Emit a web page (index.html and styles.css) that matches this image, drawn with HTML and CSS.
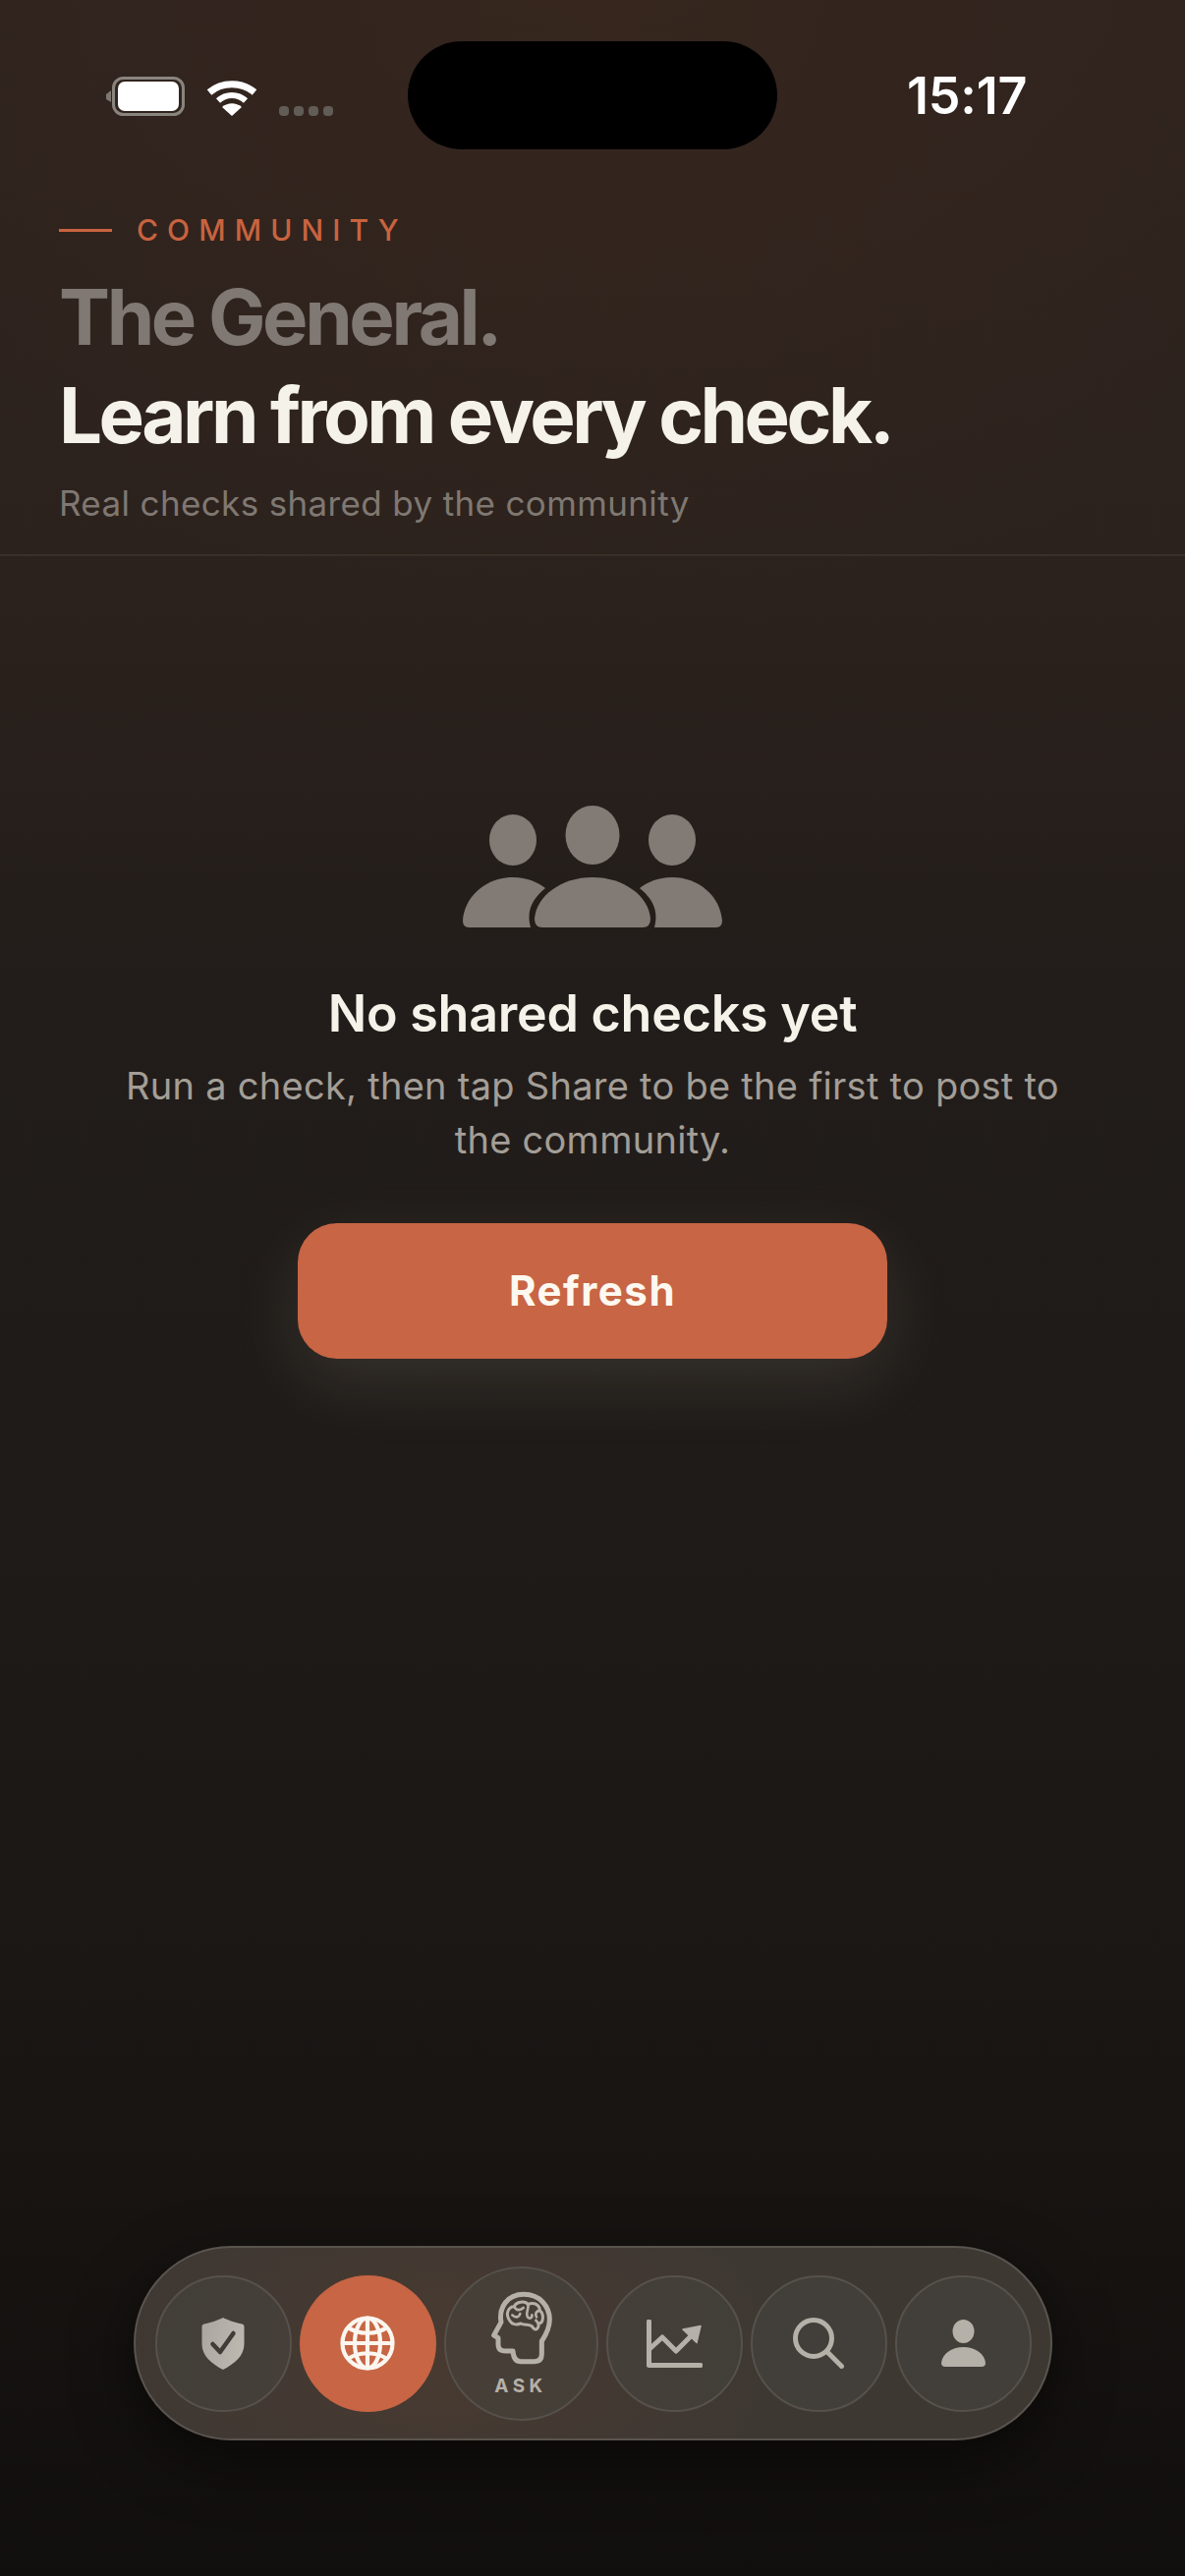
FILE: index.html
```html
<!DOCTYPE html>
<html lang="en">
<head>
    <meta charset="UTF-8">
    <meta name="viewport" content="width=device-width, initial-scale=1.0">
    <title>The General</title>
    <link rel="stylesheet" href="styles.css">
</head>
<body>
    <div class="page">
        <div class="status">
            <div class="status-left">
                <svg class="battery" width="84" height="40" viewBox="0 0 84 40">
                    <path d="M8 14 L3 18 V23 L8 26 Z" fill="#7d7671"/>
                    <rect x="10.5" y="1.5" width="71" height="37" rx="10" fill="none" stroke="#8a847f" stroke-width="3"/>
                    <rect x="15" y="5" width="62" height="30" rx="7" fill="#fff"/>
                </svg>
                <svg class="wifi" width="52" height="38" viewBox="0 0 52 38">
                    <path d="M3 14 C16 3 36 3 49 14" fill="none" stroke="#fff" stroke-width="7"/>
                    <path d="M12 22.500 C20 15 32 15 40 22.500" fill="none" stroke="#fff" stroke-width="6"/>
                    <path d="M26 38 L16 29 C22 24 30 24 36 29 Z" fill="#fff"/>
                </svg>
                <div class="signal"><i></i><i></i><i></i><i></i></div>
            </div>
            <div class="island"></div>
            <div class="time">15:17</div>
        </div>

        <header class="head">
            <div class="kicker"><span class="kicker-line"></span>COMMUNITY</div>
            <h1 class="title title-dim">The General.</h1>
            <h1 class="title">Learn from every check.</h1>
            <p class="sub">Real checks shared by the community</p>
        </header>

        <main class="empty">
            <svg class="people" width="264" height="124" viewBox="0 0 264 124">
                <ellipse cx="51" cy="35" rx="24" ry="26" fill="#827b75"/>
                <ellipse cx="213" cy="35" rx="24" ry="26" fill="#827b75"/>
                <ellipse cx="132" cy="30" rx="27.500" ry="30" fill="#827b75"/>
                <path d="M69 124 H6 Q0 124 0 117 C2 92 24 73 51 73 C66 73 76 78 84 84 C72 94 64 106 69 124 Z" fill="#827b75"/>
                <path d="M195 124 H258 Q264 124 264 117 C262 92 240 73 213 73 C198 73 188 78 180 84 C192 94 200 106 195 124 Z" fill="#827b75"/>
                <path d="M81 124 Q73 124 73 115 C75 92 100 73 132 73 C164 73 189 92 191 115 Q191 124 183 124 Z" fill="#827b75"/>
            </svg>
            <h2 class="empty-title">No shared checks yet</h2>
            <p class="empty-text">Run a check, then tap Share to be the first to post to the community.</p>
            <button type="button" class="refresh">Refresh</button>
        </main>

        <nav class="tabbar">
            <div class="tab">
                <svg width="44" height="53" viewBox="0 0 43 53">
                    <defs>
                        <linearGradient id="shieldFill" x1="0" y1="0" x2="1" y2="0.300">
                            <stop offset="0" stop-color="#aaa69f"/>
                            <stop offset="1" stop-color="#bcb8b0"/>
                        </linearGradient>
                    </defs>
                    <path d="M21.500 0 C26 2.500 34 5 41 6.500 Q43 7 43 9 V27 C43 39 33 47 21.500 53 C10 47 0 39 0 27 V9 Q0 7 2 6.500 C9 5 17 2.500 21.500 0 Z" fill="url(#shieldFill)"/>
                    <path d="M11 27 L18.500 35 L32 16" fill="none" stroke="#413c38" stroke-width="4.500" stroke-linecap="round" stroke-linejoin="round"/>
                </svg>
            </div>
            <div class="tab tab-on">
                <svg width="56" height="56" viewBox="0 0 56 56" fill="none" stroke="#fbf6ef" stroke-width="4.200">
                    <circle cx="28" cy="28" r="25.500"/>
                    <ellipse cx="28" cy="28" rx="13" ry="25.500"/>
                    <path d="M28 2 V54 M2 28 H54"/>
                    <path d="M7 11 C18 20 38 20 49 11 M7 45 C18 36 38 36 49 45"/>
                </svg>
            </div>
            <div class="tab tab-ask">
                <svg width="65" height="75" viewBox="1130 185 195 225" fill="none" stroke="#b5b0a8" stroke-linecap="round" stroke-linejoin="round">
                    <path stroke-width="15" d="M1235 195 C1285 195 1314 232 1314 272 C1314 300 1302 320 1290 338 V378 Q1290 400 1268 400 H1226 Q1204 400 1202 368 H1178 Q1157 368 1157 348 V328 L1144 320 L1166 280 C1158 235 1185 195 1235 195 Z"/>
                    <path stroke-width="9" d="M1192 275 C1178 255 1188 232 1206 232 C1212 216 1240 214 1248 226 C1266 216 1284 228 1284 244 C1298 254 1296 284 1280 284 C1282 298 1272 308 1264 298 C1258 282 1240 292 1226 284 C1212 290 1198 286 1192 275 Z"/>
                    <path stroke-width="8" d="M1206 232 C1212 246 1226 244 1234 236 M1248 226 C1252 240 1240 248 1246 262 C1250 272 1262 268 1260 258 M1284 244 C1274 246 1268 254 1274 264 M1200 258 C1212 270 1222 262 1224 254 M1280 284 L1272 274"/>
                </svg>
                <span class="ask-label">ASK</span>
            </div>
            <div class="tab">
                <svg width="57" height="49" viewBox="0 0 57 49" fill="none" stroke="#b5b0a8" stroke-width="5" stroke-linecap="round" stroke-linejoin="round">
                    <path d="M2.500 2 V46.500 H55"/>
                    <path d="M3 30 L16 18 L30 32 L44 18"/>
                    <path d="M37 10 L55 6.500 L51 23.500 Z" fill="#b5b0a8" stroke-width="1.500"/>
                </svg>
            </div>
            <div class="tab">
                <svg width="52" height="52" viewBox="0 0 52 52" fill="none" stroke="#b5b0a8" stroke-width="5" stroke-linecap="round">
                    <circle cx="21" cy="21" r="18.500"/>
                    <path d="M35 35 L49.500 49.500"/>
                </svg>
            </div>
            <div class="tab">
                <svg width="45" height="48" viewBox="0 0 45 48" fill="#b5b0a8">
                    <ellipse cx="22.500" cy="12" rx="11" ry="12"/>
                    <path d="M4 48 Q0 48 0 44 C1 35 10 28 22.500 28 C35 28 44 35 45 44 Q45 48 41 48 Z"/>
                </svg>
            </div>
        </nav>
    </div>
</body>
</html>
```

FILE: styles.css
```css
* {
    box-sizing: border-box;
}

body {
    margin: 0;
    background: #12100d;
    font-family: "Inter", "Liberation Sans", sans-serif;
}

.page {
    display: flex;
    flex-direction: column;
    height: 2622px;
    overflow: hidden;
    background:
        radial-gradient(ellipse 900px 620px at 50% 0, rgba(60, 40, 30, .55), rgba(60, 40, 30, 0)),
        linear-gradient(180deg, #2e231e 0, #2c221d 560px, #221d1a 1000px, #1f1b18 1500px, #1a1714 2000px, #110f0d 2622px);
}

/* status bar */
.status {
    display: flex;
    align-items: flex-start;
    height: 180px;
    padding: 42px 0 0 105px;
}

.status-left {
    display: flex;
    align-items: flex-end;
    width: 310px;
    height: 76px;
}

.battery {
    margin-right: 21px;
}

.wifi {
    margin-right: 22px;
}

.signal {
    display: flex;
    gap: 5px;
}

.signal i {
    width: 10px;
    height: 10px;
    border-radius: 4px;
    background: #625c57;
}

.island {
    width: 376px;
    height: 110px;
    border-radius: 55px;
    background: #000;
}

.time {
    margin: 26px 0 0 132px;
    color: #fff;
    font-size: 52px;
    line-height: 60px;
    font-weight: 600;
    letter-spacing: -.2px;
}

/* heading */
.head {
    height: 386px;
    padding: 38px 60px 0;
    border-bottom: 2px solid #3a302a;
}

.kicker {
    display: flex;
    align-items: center;
    gap: 25px;
    height: 32px;
    color: #c8633f;
    font-size: 30px;
    font-weight: 500;
    letter-spacing: 9.100px;
}

.kicker-line {
    width: 54px;
    height: 3px;
    background: #c8633f;
}

.title {
    margin: 0;
    color: #f5f2ea;
    font-size: 78px;
    line-height: 100px;
    font-weight: 700;
    letter-spacing: -3.500px;
}

.title-dim {
    margin-top: 23px;
    color: #7f7873;
    letter-spacing: -3.400px;
}

.sub {
    margin: 17px 0 0;
    color: #7f7872;
    font-size: 35px;
    line-height: 44px;
    letter-spacing: .36px;
}

/* empty state */
.empty {
    display: flex;
    flex-direction: column;
    align-items: center;
    padding-top: 254px;
}

.empty-title {
    margin: 52px 0 0;
    color: #f5f2ea;
    font-size: 52px;
    line-height: 72px;
    font-weight: 600;
    letter-spacing: -.25px;
}

.empty-text {
    width: 980px;
    margin: 10px 0 0;
    color: #a39e97;
    font-size: 38px;
    line-height: 55px;
    letter-spacing: .27px;
    text-align: center;
}

.refresh {
    width: 600px;
    height: 138px;
    margin-top: 57px;
    padding-bottom: 3px;
    border: 0;
    border-radius: 40px;
    background: #c76544;
    color: #fdf8f0;
    font-family: inherit;
    font-size: 42px;
    font-weight: 700;
    letter-spacing: 1.500px;
    box-shadow: 0 24px 70px rgba(255, 250, 225, .1);
}

/* bottom nav */
.tabbar {
    display: flex;
    align-items: center;
    justify-content: center;
    gap: 8px;
    width: 935px;
    height: 198px;
    margin: auto 0 138px 136px;
    border: 2px solid #5a544e;
    border-radius: 99px;
    background:
        radial-gradient(ellipse 340px 200px at 33% 55%, rgba(110, 65, 40, .22), rgba(110, 65, 40, 0)),
        #3e3833;
    box-shadow: 0 20px 60px rgba(0, 0, 0, .5);
}

.tab {
    display: flex;
    align-items: center;
    justify-content: center;
    width: 139px;
    height: 139px;
    border: 2px solid #56514b;
    border-radius: 50%;
    background: rgba(72, 70, 64, .45);
}

.tab-on {
    border: 0;
    background: #c76544;
}

.tab-ask {
    flex-direction: column;
    width: 157px;
    height: 157px;
}

.ask-label {
    margin-top: 12px;
    color: #b5b0a8;
    font-size: 19px;
    line-height: 20px;
    font-weight: 700;
    letter-spacing: 4.500px;
}
```
